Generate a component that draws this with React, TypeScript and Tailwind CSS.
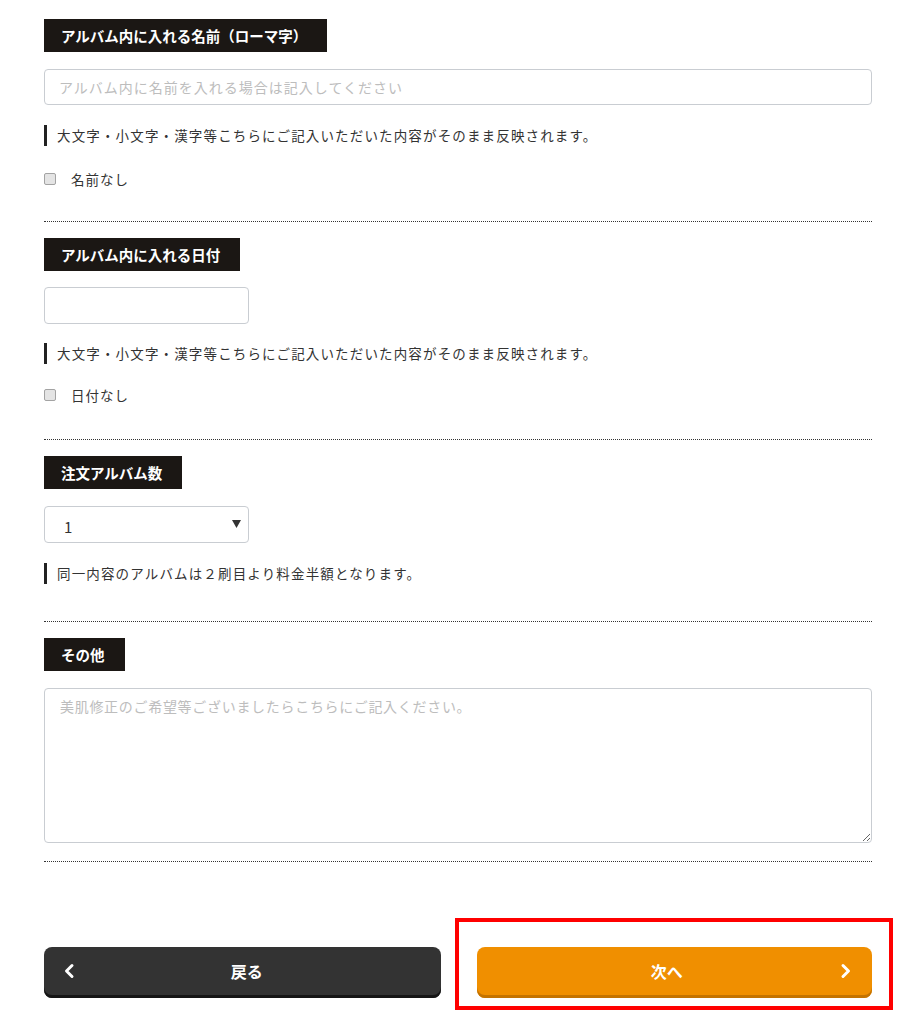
import type {ReactNode} from 'react'

function Label({children}: {children: ReactNode}) {
  return <div className="flex h-[33px] w-fit items-center bg-[#1b1714] pl-[17px] pr-[20px] text-[14.5px] font-bold text-white">
    {children}
  </div>
}

function Note({children, className}: {children: ReactNode, className: string}) {
  return <div className={`flex h-[21px] items-center border-l-[3px] border-[#222] pl-[10px] text-[13.5px] tracking-[1.15px] text-[#333] ${className}`}>
    {children}
  </div>
}

function Check({label, className}: {label: string, className: string}) {
  return <label className={`flex h-[20px] items-center ${className}`}>
    <input type="checkbox" className="h-[12px] w-[12px] appearance-none rounded-[2px] border border-[#a3a3a3] bg-[#e4e4e4]" />
    <span className="ml-[15px] text-[13.5px] tracking-[1px] text-[#333]">{label}</span>
  </label>
}

function Divider({className}: {className: string}) {
  return <div className={`border-t border-dotted border-[#333] ${className}`} />
}

function Chevron({left}: {left?: boolean}) {
  return <svg width="12" height="16" viewBox="0 0 12 16" className="shrink-0">
    <polyline
      points={left ? '9,2.5 3.5,8 9,13.5' : '3,2.5 8.5,8 3,13.5'}
      fill="none" stroke="white" strokeWidth="3" strokeLinecap="round" strokeLinejoin="round" />
  </svg>
}

export default function App() {
  return <div className="min-h-[1017px] w-[900px] bg-white pl-[44px] pr-[28px] pt-[19px] font-['Noto_Sans_CJK_JP','Noto_Sans',sans-serif]">

    {/* name */}
    <Label>アルバム内に入れる名前（ローマ字）</Label>
    <input
      placeholder="アルバム内に名前を入れる場合は記入してください"
      className="mt-[17px] block h-[36px] w-full rounded-[4px] border border-[#c9cdd2] px-[14px] text-[14px] tracking-[1px] outline-none placeholder:text-[#bdbdbd]" />
    <Note className="mt-[20px]">大文字・小文字・漢字等こちらにご記入いただいた内容がそのまま反映されます。</Note>
    <Check label="名前なし" className="mt-[23px]" />
    <Divider className="mt-[32px]" />

    {/* date */}
    <div className="mt-[16px]">
      <Label>アルバム内に入れる日付</Label>
    </div>
    <input className="mt-[16px] block h-[37px] w-[205px] rounded-[4px] border border-[#c9cdd2] px-[14px] outline-none" />
    <Note className="mt-[19px]">大文字・小文字・漢字等こちらにご記入いただいた内容がそのまま反映されます。</Note>
    <Check label="日付なし" className="mt-[21px]" />
    <Divider className="mt-[34px]" />

    {/* count */}
    <div className="mt-[16px]">
      <Label>注文アルバム数</Label>
    </div>
    <div className="relative mt-[17px] w-[205px]">
      <select className="block h-[37px] w-full appearance-none rounded-[4px] border border-[#c9cdd2] bg-white pl-[19px] pt-[5px] text-[15px] text-[#333] outline-none">
        <option>1</option>
        <option>2</option>
        <option>3</option>
      </select>
      <svg width="9" height="8" viewBox="0 0 9 8" className="pointer-events-none absolute right-[8px] top-[14px]">
        <polygon points="0,0 9,0 4.5,8" fill="#333" />
      </svg>
    </div>
    <Note className="mt-[20px]">同一内容のアルバムは２刷目より料金半額となります。</Note>
    <Divider className="mt-[37px]" />

    {/* other */}
    <div className="mt-[16px]">
      <Label>その他</Label>
    </div>
    <textarea
      placeholder="美肌修正のご希望等ございましたらこちらにご記入ください。"
      className="mt-[17px] block h-[155px] w-full rounded-[4px] border border-[#c9cdd2] px-[15px] py-[7px] text-[14px] tracking-[0.7px] outline-none placeholder:text-[#bdbdbd]" />
    <Divider className="mt-[18px]" />

    {/* buttons */}
    <div className="mt-[85px] flex gap-[36px]">
      <button className="flex h-[51px] w-[397px] items-center rounded-[8px] bg-[#333] pb-[3px] pl-[19px] pr-[22px] text-[16px] font-bold text-white shadow-[inset_0_-3px_0_#151515]">
        <Chevron left />
        <span className="flex-1 text-center">戻る</span>
      </button>
      <div className="relative w-[396px]">
        <button className="flex h-[51px] w-full items-center rounded-[8px] bg-[#f08f00] pb-[3px] pl-[17px] pr-[20px] text-[16px] font-bold text-white shadow-[inset_0_-3px_0_#c47300]">
          <span className="flex-1 text-center">次へ</span>
          <Chevron />
        </button>
        <span className="pointer-events-none absolute -bottom-[12px] -left-[22px] -right-[21px] -top-[29px] border-4 border-[#ff0000]" />
      </div>
    </div>
  </div>
}
